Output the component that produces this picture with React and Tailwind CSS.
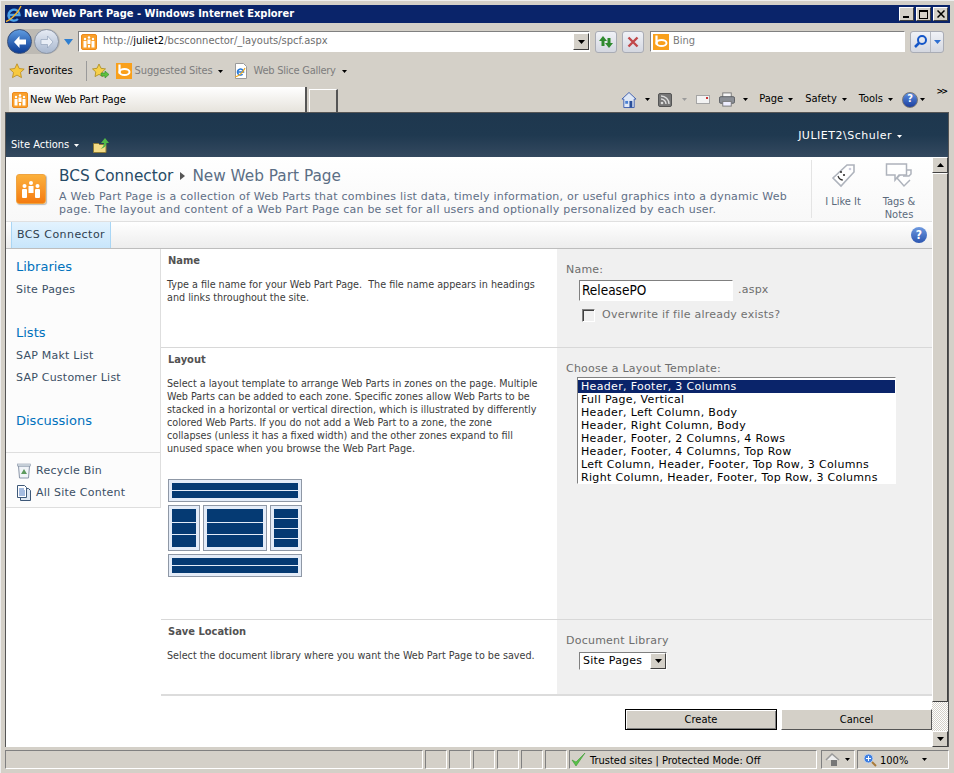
import React from "react";

const T = "font-['DejaVu_Sans_Condensed','DejaVu_Sans',sans-serif]";
const F = "font-['DejaVu_Sans',sans-serif]";
const V = "font-['DejaVu_Sans',sans-serif] tracking-[0.23px]";

const Caret = ({ c = "#000", className = "", big }) => (
  <svg width={big ? 7 : 5} height={big ? 4 : 3} viewBox="0 0 7 4" preserveAspectRatio="none" className={`shrink-0 ${className}`}><path d="M0 0h7L3.500 4z" fill={c} /></svg>
);

const SpIcon = ({ s = 16 }) => (
  <svg width={s} height={s} viewBox="0 0 16 16">
    <rect x="0.500" y="0.500" width="15" height="15" rx="1.500" fill="#f9a02c" stroke="#ee8a1a" />
    <rect x="2.500" y="7" width="3" height="6.500" fill="#fff" /><rect x="6.500" y="5.500" width="3" height="4.500" fill="#fff" /><rect x="10.500" y="7" width="3" height="6.500" fill="#fff" />
    <circle cx="4" cy="5" r="1.200" fill="#fff" /><circle cx="8" cy="3.500" r="1.200" fill="#fff" /><circle cx="12" cy="5" r="1.200" fill="#fff" />
    <rect x="7" y="11" width="2" height="2.500" fill="#fff" />
  </svg>
);

const Bing = ({ s = 16 }) => (
  <svg width={s} height={s} viewBox="0 0 16 16">
    <rect width="16" height="16" fill="#f9a01b" />
    <path d="M3.500 1.500v9" stroke="#fff" strokeWidth="2.200" />
    <ellipse cx="8.500" cy="9" rx="5" ry="3" fill="none" stroke="#fff" strokeWidth="2" />
  </svg>
);

const Star = ({ s = 16 }) => (
  <svg width={s} height={s} viewBox="0 0 16 16">
    <path d="M8 .8l2.200 4.700 5 .6-3.700 3.400 1 5.100L8 12.100l-4.500 2.500 1-5.100L.8 6.100l5-.6z" fill="#f7c93e" stroke="#b9891a" strokeWidth=".8" />
  </svg>
);

const IeDoc = () => (
  <svg width="14" height="16" viewBox="0 0 14 16">
    <path d="M1.500.5h8l3 3v12h-11z" fill="#fff" stroke="#9a9a9a" />
    <path d="M3.500 9h6a3 3 0 1 0-.9 2.200" fill="none" stroke="#2a7bd8" strokeWidth="1.600" />
    <path d="M1 14c3-.7 8-4 10-9" fill="none" stroke="#eda81f" strokeWidth="1.200" />
  </svg>
);

const SysBtn = ({ children }) => (
  <div className="w-[15px] h-[14px] bg-[#d4d0c8] border border-t-white border-l-white border-r-[#404040] border-b-[#404040] flex items-center justify-center">{children}</div>
);

const Sunken = ({ className = "", children }) => (
  <div className={`border border-t-[#808080] border-l-[#808080] border-r-white border-b-white ${className}`}>{children}</div>
);

const ComboArrow = ({ w = 16, h = 17 }) => (
  <div style={{ width: w, height: h }} className="shrink-0 bg-[#d4d0c8] border border-t-white border-l-white border-r-[#404040] border-b-[#404040] flex items-center justify-center">
    <Caret big />
  </div>
);

const ToolBtn = ({ children }) => (
  <div className="w-[22px] h-[22px] rounded-[3px] border border-[#a9acb5] bg-gradient-to-b from-[#f0f2f7] to-[#d4d7e0] flex items-center justify-center">{children}</div>
);

const NavBall = ({ active }) => (
  <div className={`w-[25px] h-[25px] rounded-full flex items-center justify-center border ${active ? "bg-gradient-to-b from-[#5f9be0] to-[#0b3b94] border-[#39507a]" : "bg-gradient-to-b from-[#e6ebf4] to-[#a9b8cf] border-[#8a94a4]"}`}>
    <svg width="16" height="14" viewBox="0 0 16 14">
      {active
        ? <path d="M7.500 1L2 7l5.500 6V9.500H14v-5H7.500z" fill="#fff" />
        : <path d="M8.500 1L14 7l-5.500 6V9.500H2v-5h6.500z" fill="#e9eef6" stroke="#8a9ab4" strokeWidth=".6" />}
    </svg>
  </div>
);

const Menu = ({ children, className = "" }) => (
  <span className={`flex items-center gap-[5px] text-[11px] text-black ${className}`}>{children}<Caret /></span>
);

const Zone = ({ className = "", children }) => (
  <div className={`border border-[#8f98a6] bg-[#e4ecf8] p-[3px] flex flex-col gap-px ${className}`}>{children}</div>
);
const Bar = ({ h }) => <div style={{ height: h }} className="bg-[#053a73]" />;

const navLink = `${V} text-[11px] text-[#3b4f65]`;
const heading = `${F} text-[13px] text-[#0072bc]`;

const LayoutDiagram = () => (
  <div className="w-[134px] flex flex-col gap-[3px]">
    <Zone className="h-[23px]"><Bar h={7} /><Bar h={7} /></Zone>
    <div className="flex justify-between h-[46px]">
      <Zone className="w-[32px]"><Bar h={13} /><Bar h={11} /><Bar h={12} /></Zone>
      <Zone className="w-[64px]"><Bar h={13} /><Bar h={11} /><Bar h={12} /></Zone>
      <Zone className="w-[32px]"><Bar h={9} /><Bar h={9} /><Bar h={9} /><Bar h={8} /></Zone>
    </div>
    <Zone className="h-[23px]"><Bar h={7} /><Bar h={7} /></Zone>
  </div>
);

const Section = ({ h, title, right, children, last }) => (
  <div style={{ height: h }} className={`flex ${last ? "" : "border-b border-[#d8d8d8]"}`}>
    <div className="w-[396px] pl-[6px] pr-[19px] pt-[5px]">
      <div className={`${T} text-[11px] font-bold text-[#525252] ml-px mb-[11px] leading-[13px]`}>{title}</div>
      {children}
    </div>
    <div className="flex-1 bg-[#f0f0f0] pl-[9px]">{right}</div>
  </div>
);

const rowText = `${T} text-[10.7px] leading-[13px] text-[#3c3c3c]`;

const options = [
  "Header, Footer, 3 Columns", "Full Page, Vertical", "Header, Left Column, Body", "Header, Right Column, Body",
  "Header, Footer, 2 Columns, 4 Rows", "Header, Footer, 4 Columns, Top Row",
  "Left Column, Header, Footer, Top Row, 3 Columns", "Right Column, Header, Footer, Top Row, 3 Columns",
];

const Seg = ({ w, className = "", children }) => (
  <div style={{ width: w }} className={`h-[19px] shrink-0 border border-t-[#808080] border-l-[#808080] border-r-white border-b-white ${className}`}>{children}</div>
);

export default function App() {
  return (
    <div className={`${T} w-[954px] h-[773px] overflow-hidden bg-[#d4d0c8] flex flex-col pl-[4px] pr-[4px] pt-[4px] pb-[4px] border-t border-l border-[#eeeeee]`}>
      {/* title */}
      <div className="h-[18px] shrink-0 bg-[#0a246a] flex items-center justify-between pr-[2px]">
        <div className="flex items-center gap-[1px]">
          <svg width="18" height="18" viewBox="0 0 18 18" className="-mt-[1px]">
            <path d="M4.500 10h10a5.500 5.500 0 1 0-1.600 4" fill="none" stroke="#4ba3ea" strokeWidth="2.400" />
            <path d="M1 16.500C4 16 13 9 16 1" fill="none" stroke="#f2b32b" strokeWidth="1.400" />
          </svg>
          <span className={`text-white font-bold text-[11px] ${T}`}>New Web Part Page - Windows Internet Explorer</span>
        </div>
        <div className="flex gap-[2px]">
          <SysBtn><div className="w-[6px] h-[2px] bg-black mt-[6px] -ml-[2px]" /></SysBtn>
          <SysBtn><div className="w-[9px] h-[9px] border border-t-2 border-black" /></SysBtn>
          <SysBtn><svg width="8" height="8" viewBox="0 0 8 8"><path d="M.5.500l7 7M7.500.500l-7 7" stroke="#000" strokeWidth="1.500" /></svg></SysBtn>
        </div>
      </div>

      {/* address row */}
      <div className="h-[33px] shrink-0 flex items-center pl-[2px] pr-[3px] pt-[4px]">
        <div className="flex items-center gap-[2px] rounded-full bg-[#bdbab4] pr-px">
          <NavBall active />
          <NavBall />
        </div>
        <div className="ml-[4px] mr-[5px]">
          <svg width="9" height="6" viewBox="0 0 9 6"><path d="M0 0h9L4.500 6z" fill="#2f7fd0" /></svg>
        </div>
        <Sunken className="w-[512px] h-[21px] bg-white flex items-center relative">
          <div className="ml-[2px]"><SpIcon /></div>
          <span className="ml-[6px] text-[11px] text-[#6d6d6d]">http://<span className="text-black">juliet2</span>/bcsconnector/_layouts/spcf.aspx</span>
          <div className="ml-auto"><ComboArrow /></div>
        </Sunken>
        <div className="w-[5px]" />
        <ToolBtn>
          <svg width="16" height="14" viewBox="0 0 16 14"><path d="M5 1L1 6h2.500v5H6.500V6H9zM11 13l4-5h-2.500V3H9.500v5H7z" fill="#2f8a2f" /></svg>
        </ToolBtn>
        <div className="w-[5px]" />
        <ToolBtn>
          <svg width="12" height="12" viewBox="0 0 12 12"><path d="M1.500 1.500l9 9M10.500 1.500l-9 9" stroke="#c1484a" strokeWidth="2.400" /></svg>
        </ToolBtn>
        <div className="w-[6px]" />
        <Sunken className="w-[255px] h-[21px] bg-white flex items-center">
          <div className="ml-[2px]"><Bing /></div>
          <span className="ml-[4px] text-[11px] text-[#7a7a7a]">Bing</span>
        </Sunken>
        <div className="w-[5px]" />
        <div className="w-[34px] h-[22px] rounded-[3px] border border-[#a9acb5] bg-gradient-to-b from-[#f0f2f7] to-[#d4d7e0] flex items-center">
          <div className="w-[20px] flex justify-center border-r border-[#b5b8c0] h-full items-center">
            <svg width="15" height="15" viewBox="0 0 15 15"><circle cx="9" cy="6" r="4" fill="none" stroke="#1456c8" strokeWidth="2" /><path d="M6 9l-4 4" stroke="#1456c8" strokeWidth="2.500" /></svg>
          </div>
          <div className="flex-1 flex justify-center"><Caret big c="#2f6fd0" /></div>
        </div>
      </div>

      {/* favorites */}
      <div className="h-[30px] shrink-0 flex items-center pl-[4px] text-[11px]">
        <Star />
        <span className="ml-[3px] text-black">Favorites</span>
        <div className="w-px h-[20px] bg-[#9a9a9a] ml-[13px] mr-[5px]" />
        <svg width="18" height="16" viewBox="0 0 18 16">
          <path d="M7 1l2 4.300 4.500.6-3.300 3.100.8 4.600L7 11.400l-4 2.200.8-4.600L.5 5.900 5 5.300z" fill="#f7d04a" stroke="#a98a1a" strokeWidth=".8" />
          <path d="M9 10h4V8l4 3.500-4 3.500v-2H9z" fill="#5fbf3f" stroke="#2f8a2f" strokeWidth=".6" />
        </svg>
        <div className="ml-[6px]"><Bing /></div>
        <span className="ml-[3px] text-[#7d7d7d] tracking-[-0.13px]">Suggested Sites</span>
        <Caret className="ml-[5px]" />
        <div className="ml-[11px]"><IeDoc /></div>
        <span className="ml-[6px] text-[#7d7d7d] tracking-[-0.25px]">Web Slice Gallery</span>
        <Caret className="ml-[6px]" />
      </div>

      {/* tabs */}
      <div className="h-[26px] shrink-0 flex items-end relative">
        <div className="ml-[4px] w-[298px] h-[25px] bg-gradient-to-b from-white to-[#e6e3dc] border-r-2 border-[#555] flex items-center pl-[3px]">
          <SpIcon />
          <span className="ml-[2px] mt-[2px] text-[11px] text-black">New Web Part Page</span>
        </div>
        <div className="ml-[2px] w-[29px] h-[23px] border-t border-l border-white border-r-2 border-r-[#555]" />
        <div className="ml-auto mr-[25px] self-center mt-[1px] flex items-center text-[11px]">
          <svg width="16" height="18" viewBox="0 0 17 18">
            <path d="M8.500 1L1 8h2v9h11V8h2z" fill="#dfe8f6" stroke="#3f5fb0" />
            <rect x="9" y="10" width="3" height="7" fill="#2a4f9a" /><rect x="4.500" y="10" width="3" height="3" fill="#4a7fd0" />
          </svg>
          <Caret className="ml-[8px]" />
          <div className="ml-[8px] w-[14px] h-[14px] bg-[#777] rounded-[2px] flex items-center justify-center border border-[#555]">
            <svg width="10" height="10" viewBox="0 0 10 10"><circle cx="2" cy="8" r="1.300" fill="#ddd" /><path d="M1 4a5 5 0 0 1 5 5M1 1a8 8 0 0 1 8 8" fill="none" stroke="#ddd" strokeWidth="1.400" /></svg>
          </div>
          <Caret c="#9b9b9b" className="ml-[10px]" />
          <div className="ml-[9px] w-[14px] h-[9px] bg-[#f3f3f3] border border-[#a5a5a5] relative"><div className="absolute right-[1px] top-[1px] w-[2px] h-[2px] bg-[#c33]" /></div>
          <svg width="16" height="15" viewBox="0 0 17 15" className="ml-[9px]">
            <rect x="4" y="0.500" width="9" height="5" fill="#f7f7f7" stroke="#777" />
            <rect x="0.500" y="4.500" width="16" height="7" rx="1.500" fill="#8b8f96" stroke="#5a5d62" />
            <rect x="4" y="9.500" width="9" height="5" fill="#eef" stroke="#777" />
          </svg>
          <Caret className="ml-[8px]" />
          <Menu className="ml-[11px]">Page</Menu>
          <Menu className="ml-[12px]">Safety</Menu>
          <Menu className="ml-[12px]">Tools</Menu>
          <div className="ml-[9px] w-[16px] h-[16px] rounded-full bg-gradient-to-b from-[#5f8ee0] to-[#1d3f9f] border border-[#777] text-white font-bold text-[11px] flex items-center justify-center">?</div>
          <Caret className="ml-[2px]" />
        </div>
        <span className="absolute right-[4px] top-[1px] text-[9px] font-bold tracking-[-2px] leading-none text-black">&gt;&gt;</span>
      </div>

      {/* page frame */}
      <div className="w-[944px] flex-1 min-h-0 flex flex-col border-t border-l border-r border-[#555] bg-white relative">
        <div className="h-[44px] shrink-0 bg-gradient-to-b from-[#1e374e] via-[#1f3950] to-[#34495f] flex pl-[5px] pr-[46px] text-white text-[11px]">
          <div className="flex items-center mt-[21px] h-[23px]">
            <span className={`${T}`}>Site Actions</span>
            <Caret c="#fff" className="ml-[5px]" />
            <svg width="16" height="16" viewBox="0 0 16 16" className="ml-[14px] shrink-0">
              <path d="M.5 5.500h5l1 1h6.500v8H.5z" fill="#f4dc86" stroke="#8f7d37" />
              <path d="M12 0l4 5h-2.500c0 3-2 5-6 6 2-1.500 3.500-3.500 3.500-6H8z" fill="#52b848" />
            </svg>
          </div>
          <div className={`ml-auto mt-[16px] flex items-center h-[14px] ${F} tracking-[0.5px]`}>
            <span className="text-[11px]">JULIET2\Schuler</span>
            <Caret c="#fff" className="ml-[5px]" />
          </div>
        </div>

        <div className="flex-1 min-h-0 flex">
          {/* content */}
          <div className="w-[926px] shrink-0 flex flex-col">
            <div className="h-[65px] shrink-0 bg-gradient-to-b from-white to-[#f8f8f8] flex border-b border-[#e0e0e0]">
              <div className="ml-[10px] mt-[17px] w-[30px] h-[30px] rounded-[3px] bg-gradient-to-b from-[#fbb03b] to-[#f47b0f] border border-[#efa340] flex items-center justify-center shadow-[1px_1px_1px_#bbb]">
                <svg width="22" height="22" viewBox="0 0 22 22">
                  <circle cx="4.500" cy="8" r="2" fill="#fff" /><circle cx="11" cy="5" r="2" fill="#fff" /><circle cx="17.500" cy="8" r="2" fill="#fff" />
                  <rect x="2" y="11" width="5" height="9" rx="1" fill="#fff" /><rect x="8.500" y="8" width="5" height="7" fill="#fff" /><rect x="15" y="11" width="5" height="9" rx="1" fill="#fff" />
                </svg>
              </div>
              <div className={`ml-[13px] mt-[9px] w-[752px] ${F}`}>
                <div className="flex items-center text-[15.3px] leading-[20px]">
                  <span className="text-[#264a66]">BCS Connector</span>
                  <svg width="5" height="8" viewBox="0 0 5 8" className="mx-[7px]"><path d="M0 0l5 4-5 4z" fill="#555" /></svg>
                  <span className="text-[#5b6e85]">New Web Part Page</span>
                </div>
                <p className={`text-[11px] leading-[13px] text-[#5f6f86] mt-[4px] ${V}`}>A Web Part Page is a collection of Web Parts that combines list data, timely information, or useful graphics into a dynamic Web page. The layout and content of a Web Part Page can be set for all users and optionally personalized by each user.</p>
              </div>
              <div className="ml-auto flex border-l border-[#e4e4e4] mt-[3px] mb-[3px] w-[121px] pr-[8px] text-[11px] text-[#5b6a7c]">
                <div className="w-[62px] flex flex-col items-center pt-[3px]">
                  <svg width="26" height="26" viewBox="0 0 26 26" className="shrink-0">
                    <path d="M17 2h7v7L11 23 3 15z" fill="#fff" stroke="#aeb3bc" strokeWidth="1.600" />
                    <circle cx="20" cy="6" r="1.300" fill="#ccd" />
                    <circle cx="11" cy="9" r="1.100" fill="#333" /><circle cx="14" cy="12" r="1.100" fill="#333" />
                    <path d="M8 13c1 3 3 4 5 4" fill="none" stroke="#333" strokeWidth="1.200" />
                  </svg>
                  <span className="mt-[6px] leading-[13px] whitespace-nowrap">I Like It</span>
                </div>
                <div className="flex-1 flex flex-col items-center pt-[3px]">
                  <svg width="28" height="26" viewBox="0 0 28 26" className="shrink-0">
                    <path d="M18 13h6l2-2v-4l-6 0-8 8 7 8 6-6" fill="#fff" stroke="#aeb3bc" strokeWidth="1.500" />
                    <path d="M1.500 1h20v11H14l-4 5v-5H1.500z" fill="#fff" stroke="#aeb3bc" strokeWidth="1.500" />
                  </svg>
                  <span className="mt-[6px] leading-[13px] text-center">Tags &amp;<br />Notes</span>
                </div>
              </div>
            </div>

            <div className="h-[27px] shrink-0 bg-gradient-to-b from-white to-[#ededed] border-b border-[#bdbdbd] flex items-stretch pl-[5px] pr-[5px]">
              <div className={`${F} tracking-[0.45px] pt-[1px] bg-gradient-to-b from-[#e3f3fe] to-[#c8e6fb] border-x border-[#a9d6f5] w-[100px] flex items-center justify-center text-[11px] text-[#2f3f4f]`}>BCS Connector</div>
              <div className="ml-auto self-center w-[16px] h-[16px] rounded-full bg-gradient-to-b from-[#6f9ae0] to-[#2c55b0] text-white text-[12px] font-bold flex items-center justify-center">?</div>
            </div>

            <div className="flex-1 min-h-0 flex">
              {/* left nav */}
              <div className="w-[155px] shrink-0">
                <div className="h-[259px] border-r border-[#dedede] bg-[#fcfcfc] flex flex-col">
                  <div className="pl-[10px] pt-[10px] flex-1">
                    <div className={`${heading} leading-[16px]`}>Libraries</div>
                    <div className={`${navLink} mt-[8px] leading-[14px]`}>Site Pages</div>
                    <div className={`${heading} leading-[16px] mt-[28px]`}>Lists</div>
                    <div className={`${navLink} mt-[8px] leading-[14px]`}>SAP Makt List</div>
                    <div className={`${navLink} mt-[8px] leading-[14px]`}>SAP Customer List</div>
                    <div className={`${heading} leading-[16px] mt-[28px]`}>Discussions</div>
                  </div>
                  <div className="h-[56px] border-t border-b border-[#dedede] pl-[11px] pt-[10px]">
                    <div className="flex items-center gap-[5px] h-[16px]">
                      <svg width="14" height="16" viewBox="0 0 14 16"><path d="M1.500 3h11l-1 12h-9z" fill="#f1f4f8" stroke="#8a96a8" /><rect x=".5" y="1" width="13" height="2" fill="#dfe5ec" stroke="#8a96a8" strokeWidth=".6" /><path d="M7 6l3 5H4z" fill="#5d9a5d" /></svg>
                      <span className={navLink}>Recycle Bin</span>
                    </div>
                    <div className="flex items-center gap-[5px] h-[16px] mt-[6px]">
                      <svg width="14" height="16" viewBox="0 0 14 16"><path d="M3.500 3.500h8l2 2v10h-10z" fill="#dfe7f2" stroke="#3d5878" /><path d="M.5.500h7l2 2v10h-9z" fill="#fff" stroke="#3d5878" /><path d="M2 4h5M2 6h6M2 8h6M2 10h6" stroke="#4c79c0" /></svg>
                      <span className={navLink}>All Site Content</span>
                    </div>
                  </div>
                </div>
              </div>

              {/* form */}
              <div className="flex-1 min-w-0 flex flex-col">
                <Section h={99} title="Name" right={
                  <div className="pt-[14px]">
                    <div className={`${V} text-[11px] leading-[13px] text-[#6d6d6d]`}>Name:</div>
                    <div className="flex items-center mt-[4px] ml-[13px]">
                      <Sunken className="w-[154px] h-[21px] bg-white flex items-center pl-[2px]">
                        <span className={`${T} text-[13.5px] text-black`}>ReleasePO</span>
                      </Sunken>
                      <span className={`${V} text-[11px] text-[#6d6d6d] ml-[5px]`}>.aspx</span>
                    </div>
                    <div className="flex items-center mt-[6px] ml-[16px]">
                      <div className="w-[13px] h-[13px] bg-[#f0f0f0] border border-t-[#808080] border-l-[#808080] border-r-white border-b-white shadow-[inset_1px_1px_0_#404040]" />
                      <span className={`${V} text-[11px] text-[#707070] ml-[7px]`}>Overwrite if file already exists?</span>
                    </div>
                  </div>
                }>
                  <p className={rowText}>Type a file name for your Web Part Page.&nbsp; The file name appears in headings and links throughout the site.</p>
                </Section>

                <Section h={272} title="Layout" right={
                  <div className="pt-[14px]">
                    <div className={`${V} text-[11px] leading-[13px] text-[#6d6d6d]`}>Choose a Layout Template:</div>
                    <Sunken className={`ml-[11px] mt-[2px] w-[319px] h-[107px] bg-white pt-[2px] ${F} tracking-[0.33px] text-[11px] leading-[13px] text-black whitespace-nowrap overflow-hidden`}>
                      {options.map((o, i) => (
                        <div key={o} className={`h-[13px] pl-[3px] ${i === 0 ? "bg-[#0a246a] text-white" : ""}`}>{o}</div>
                      ))}
                    </Sunken>
                  </div>
                }>
                  <p className={`${rowText} mb-[24px]`}>Select a layout template to arrange Web Parts in zones on the page. Multiple Web Parts can be added to each zone. Specific zones allow Web Parts to be stacked in a horizontal or vertical direction, which is illustrated by differently colored Web Parts. If you do not add a Web Part to a zone, the zone collapses (unless it has a fixed width) and the other zones expand to fill unused space when you browse the Web Part Page.</p>
                  <div className="ml-px"><LayoutDiagram /></div>
                </Section>

                <Section h={74} last title="Save Location" right={
                  <div className="pt-[14px]">
                    <div className={`${V} text-[11px] leading-[13px] text-[#6d6d6d]`}>Document Library</div>
                    <Sunken className="ml-[13px] mt-[5px] w-[88px] h-[18px] bg-white flex items-center justify-between pl-[3px]">
                      <span className={`${V} text-[11px] text-black`}>Site Pages</span>
                      <ComboArrow w={16} h={16} />
                    </Sunken>
                  </div>
                }>
                  <p className={rowText}>Select the document library where you want the Web Part Page to be saved.</p>
                </Section>

                <div className="h-[2px] shrink-0 bg-[#dcdcdc]" />
                <div className="flex justify-end gap-[4px] pt-[13px]">
                  <button className="w-[152px] h-[21px] pt-[2px] bg-[#d4d0c8] border border-black text-[11px] text-black shadow-[inset_1px_1px_0_#fff,inset_-1px_-1px_0_#808080]">Create</button>
                  <button className="w-[151px] h-[21px] pt-[2px] bg-[#d4d0c8] border border-t-white border-l-white border-r-[#555] border-b-[#555] text-[11px] text-black">Cancel</button>
                </div>
              </div>
            </div>
          </div>

          {/* scrollbar */}
          <div className="w-[16px] shrink-0 flex flex-col bg-[repeating-conic-gradient(#d4d0c8_0_25%,#ffffff_0_50%)] bg-[length:2px_2px]">
            <div className="h-[16px] bg-[#d4d0c8] border border-t-white border-l-white border-r-[#404040] border-b-[#404040] flex items-center justify-center"><svg width="7" height="4" viewBox="0 0 7 4"><path d="M3.500 0L7 4H0z" /></svg></div>
            <div className="h-[529px] bg-[#d4d0c8] border border-t-white border-l-white border-r-[#404040] border-b-[#404040]" />
            <div className="flex-1" />
            <div className="h-[16px] bg-[#d4d0c8] border border-t-white border-l-white border-r-[#404040] border-b-[#404040] flex items-center justify-center"><Caret big /></div>
          </div>
        </div>
      </div>

      {/* status bar */}
      <div className="h-[22px] shrink-0 flex items-end gap-[2px] text-[11px] text-black">
        <Seg w={418} />
        {[22, 22, 22, 22, 22, 22].map((w, i) => <Seg key={i} w={w} />)}
        <Seg w={248} className="flex items-center pl-[1px]">
          <svg width="15" height="15" viewBox="0 0 15 15"><path d="M1 8l4 6 9-13-9 9z" fill="#58c048" stroke="#3a9a30" strokeWidth=".6" /></svg>
          <span className="ml-[4px] mt-[3px] whitespace-nowrap">Trusted sites | Protected Mode: Off</span>
        </Seg>
        <Seg w={34} className="ml-[2px] flex items-center pl-[3px] gap-[4px]">
          <svg width="16" height="14" viewBox="0 0 16 14"><path d="M1 7l6-6 7 6" fill="#eee" stroke="#9a9a9a" strokeWidth="1.500" /><rect x="6" y="7" width="6" height="6" fill="#777" /></svg>
          <Caret />
        </Seg>
        <Seg w={92} className="flex items-center pl-[5px]">
          <svg width="14" height="14" viewBox="0 0 14 14"><circle cx="5.500" cy="5.500" r="4.500" fill="#3f7fe0" stroke="#c5d5ec" /><path d="M3 5.500h5M5.500 3v5" stroke="#fff" /><path d="M9 9l4 4" stroke="#a87a3a" strokeWidth="2" /></svg>
          <span className="ml-[3px] mt-[3px]">100%</span>
          <Caret className="ml-[14px]" />
        </Seg>
      </div>
    </div>
  );
}
